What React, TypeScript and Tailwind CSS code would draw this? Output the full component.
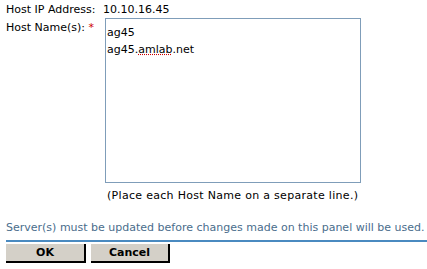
export default function App() {
  return (
    <div className="w-[427px] h-[269px] bg-white text-black text-[11px] leading-[14px] whitespace-nowrap" style={{ fontFamily: '"DejaVu Sans", Verdana, sans-serif' }}>
      <div className="pl-[6px] pt-[3px]">
        <div className="flex items-start">
          <div className="w-[97px] shrink-0">Host IP Address:</div>
          <div>10.10.16.45</div>
        </div>
        <div className="flex items-start mt-[1px]">
          <div className="w-[99px] shrink-0 pt-[3px]">
            Host Name(s): <span className="text-[#cc0000]">*</span>
          </div>
          <div className="flex flex-col">
            <div className="w-[256px] h-[165px] border border-[#7f9db9] px-[1px] pt-[5px] leading-[17px]">
              <div>ag45</div>
              <div>
                ag45.<span className="underline decoration-dotted decoration-[#cc0000]">amlab</span>.net
              </div>
            </div>
            <div className="mt-[6px] pl-[2px] tracking-[0.3px]">(Place each Host Name on a separate line.)</div>
          </div>
        </div>
      </div>
      <div className="pl-[6px] mt-[18px] text-[#4a6d8c]">Server(s) must be updated before changes made on this panel will be used.</div>
      <div className="ml-[6px] mt-[5px] h-[2px] bg-[#4a8ac0]" />
      <div className="flex gap-[5px] pl-[6px] mt-[2px]">
        <button className="w-[80px] h-[19px] bg-[#d4d0c8] border-r-2 border-b-2 border-black font-bold text-[11px] leading-none">OK</button>
        <button className="w-[79px] h-[19px] bg-[#d4d0c8] border-r-2 border-b-2 border-black font-bold text-[11px] leading-none">Cancel</button>
      </div>
    </div>
  );
}
